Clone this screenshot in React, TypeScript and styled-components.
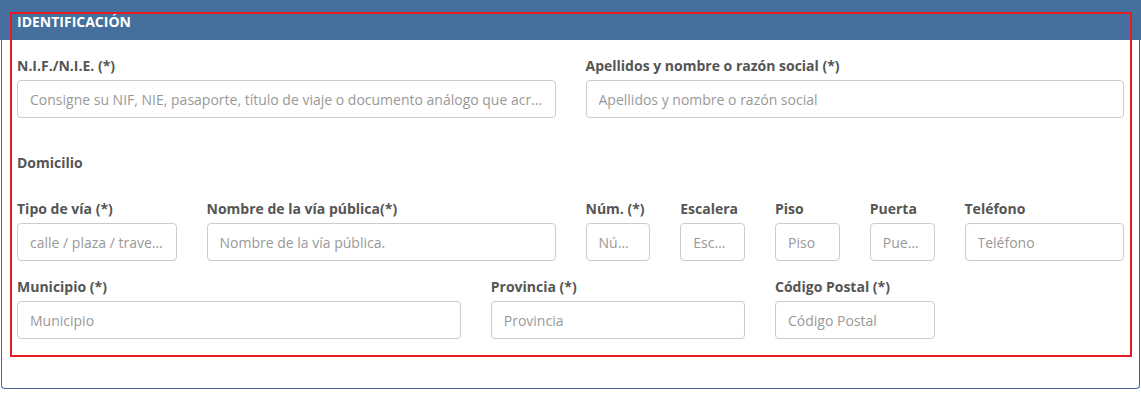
import React from 'react';
import styled, { createGlobalStyle } from 'styled-components';

const GlobalStyle = createGlobalStyle`
  html, body {
    margin: 0;
    padding: 0;
    background: #ffffff;
  }
  body {
    font-family: 'Open Sans', 'Liberation Sans', sans-serif;
  }
`;

const Panel = styled.section`
  position: relative;
  margin: 0 1px;
  height: 389px;
  box-sizing: border-box;
  border: 1px solid #3f6a97;
  border-top: none;
  border-radius: 0 0 4px 4px;
  background: #ffffff;
`;

const PanelHeading = styled.div`
  height: 40px;
  box-sizing: border-box;
  margin: 0 -2px;
  padding: 3px 17px 0;
  display: flex;
  align-items: center;
  background: #456f9c;
  color: #ffffff;
  font-size: 14px;
  font-weight: 700;
`;

const PanelBody = styled.div`
  padding: 17px 15px 0;
`;

const Row = styled.div<{ $gap?: number }>`
  display: grid;
  grid-template-columns: repeat(12, 1fr);
  column-gap: 30px;
  margin-bottom: ${p => p.$gap ?? 17}px;
`;

const Field = styled.div<{ $span: number }>`
  grid-column: span ${p => p.$span};
  display: flex;
  flex-direction: column;
  min-width: 0;
`;

const Label = styled.label`
  display: block;
  height: 18px;
  line-height: 18px;
  margin-bottom: 5px;
  font-size: 14px;
  font-weight: 700;
  color: #555555;
  white-space: nowrap;
`;

const SectionTitle = styled.div`
  height: 18px;
  line-height: 18px;
  margin: 0 0 28px;
  font-size: 14px;
  font-weight: 700;
  color: #555555;
`;

const Input = styled.input`
  box-sizing: border-box;
  width: 100%;
  height: 38px;
  padding: 0 12px;
  border: 1px solid #cccccc;
  border-radius: 4px;
  font-family: inherit;
  font-size: 14px;
  color: #555555;
  text-overflow: ellipsis;
  outline: none;

  &::placeholder {
    color: #999999;
  }
`;

const Highlight = styled.div`
  position: absolute;
  left: 8px;
  top: 12px;
  width: 1122px;
  height: 345px;
  box-sizing: border-box;
  border: 2px solid #e51c24;
  pointer-events: none;
`;

type FieldDef = { label: string; placeholder: string; span: number };

const row1: FieldDef[] = [
  { label: 'N.I.F./N.I.E. (*)', placeholder: 'Consigne su NIF, NIE, pasaporte, título de viaje o documento análogo que acredite su identidad', span: 6 },
  { label: 'Apellidos y nombre o razón social (*)', placeholder: 'Apellidos y nombre o razón social', span: 6 },
];

const row2: FieldDef[] = [
  { label: 'Tipo de vía (*)', placeholder: 'calle / plaza / travesía', span: 2 },
  { label: 'Nombre de la vía pública(*)', placeholder: 'Nombre de la vía pública.', span: 4 },
  { label: 'Núm. (*)', placeholder: 'Número', span: 1 },
  { label: 'Escalera', placeholder: 'Escalera', span: 1 },
  { label: 'Piso', placeholder: 'Piso', span: 1 },
  { label: 'Puerta', placeholder: 'Puerta', span: 1 },
  { label: 'Teléfono', placeholder: 'Teléfono', span: 2 },
];

const row3: FieldDef[] = [
  { label: 'Municipio (*)', placeholder: 'Municipio', span: 5 },
  { label: 'Provincia (*)', placeholder: 'Provincia', span: 3 },
  { label: 'Código Postal (*)', placeholder: 'Código Postal', span: 2 },
];

const renderFields = (fields: FieldDef[]) =>
  fields.map(f => (
    <Field key={f.label} $span={f.span}>
      <Label>{f.label}</Label>
      <Input type="text" placeholder={f.placeholder} />
    </Field>
  ));

export default function App() {
  return (
    <>
      <GlobalStyle />
      <Panel>
        <PanelHeading>IDENTIFICACIÓN</PanelHeading>
        <PanelBody>
          <Row $gap={36}>{renderFields(row1)}</Row>
          <SectionTitle>Domicilio</SectionTitle>
          <Row>{renderFields(row2)}</Row>
          <Row>{renderFields(row3)}</Row>
        </PanelBody>
        <Highlight />
      </Panel>
    </>
  );
}
